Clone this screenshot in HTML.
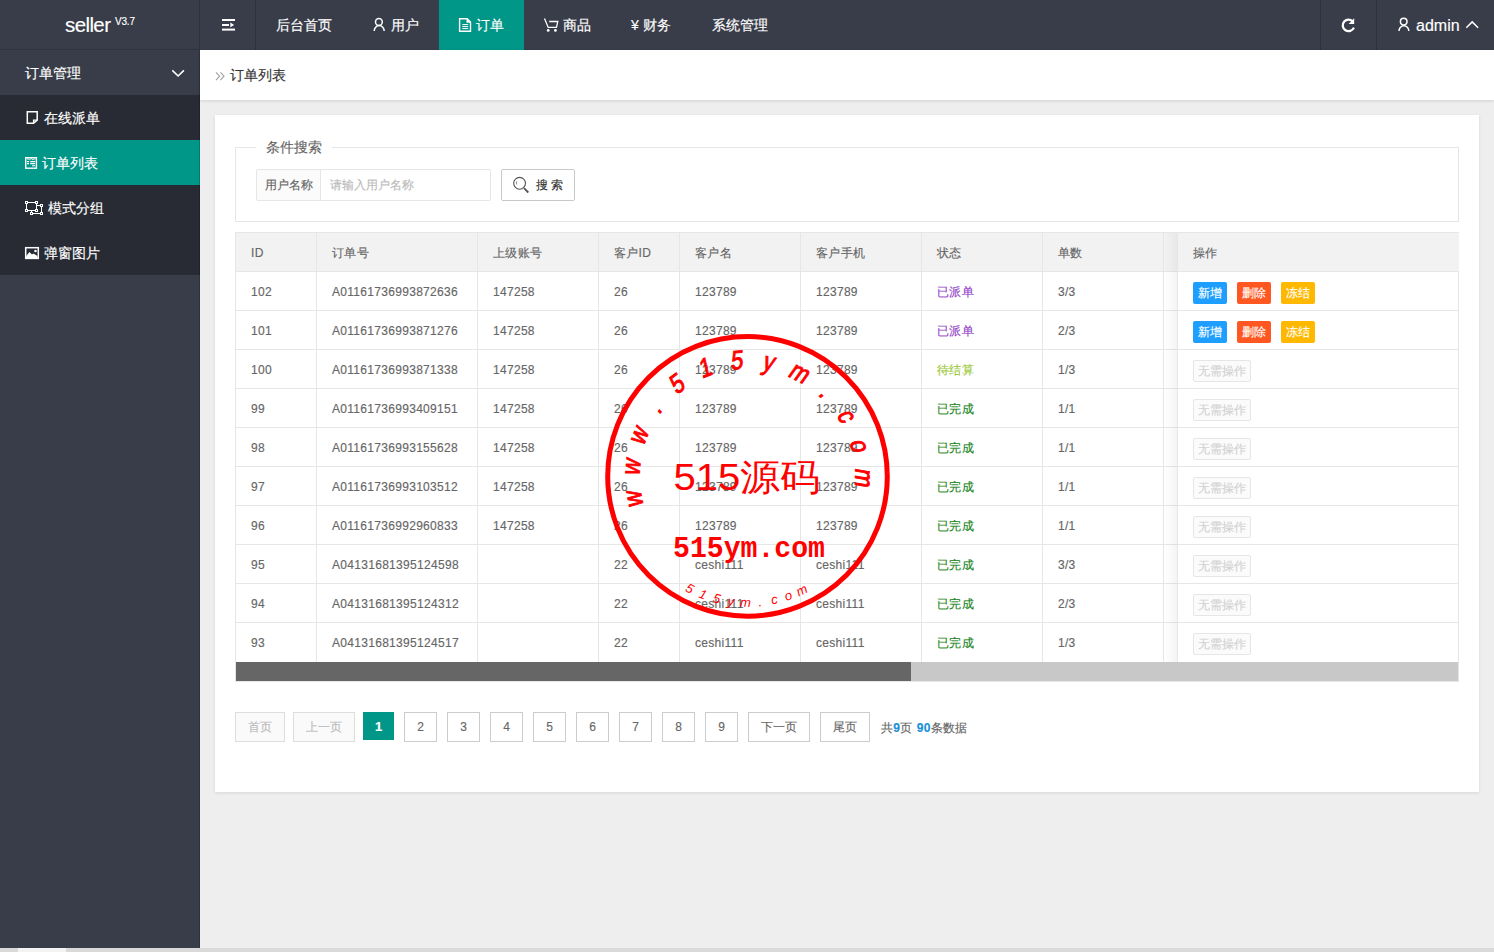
<!DOCTYPE html>
<html><head><meta charset="utf-8">
<style>
*{margin:0;padding:0;box-sizing:border-box}
html,body{width:1494px;height:952px;overflow:hidden;background:#eee;font-family:"Liberation Sans",sans-serif;font-size:14px;color:#666}
div,span,b{-webkit-text-stroke:0.15px currentColor}
.abs{position:absolute}
#hdr{position:absolute;left:0;top:0;width:1494px;height:50px;background:#393D49}
#side{position:absolute;left:0;top:50px;width:200px;height:898px;background:#393D49}
.ht{position:absolute;top:0;height:50px;line-height:50px;color:#fff;font-size:14px;white-space:nowrap}
.vl{position:absolute;top:0;width:1px;height:50px;background:#2f323c}
.nav{position:absolute;left:0;width:200px;height:45px;line-height:47px;color:#fff;font-size:14px}
#crumb{position:absolute;left:200px;top:50px;width:1294px;height:50px;background:#fff;box-shadow:0 1px 3px rgba(0,0,0,.12)}
#card{position:absolute;left:215px;top:115px;width:1264px;height:677px;background:#fff;box-shadow:0 1px 3px rgba(0,0,0,.1)}
#scroll{position:absolute;left:0;top:948px;width:1494px;height:4px;background:#d9d9d9}

#tbl{position:absolute;left:0;top:0}
.hl{left:235px;width:1224px;height:1px;background:#e6e6e6}
.vl2{top:232px;width:1px;height:430px;background:#e6e6e6}
.th,.td{height:39px;line-height:39px;padding-top:2px;letter-spacing:0.3px;font-size:12px;color:#666;white-space:nowrap}
.sp{color:#9444c8}.sy{color:#9cc93a}.sg{color:#1a851a}
#fixr{position:absolute;left:1177px;top:233px;width:281px;height:429px;background:#fff;border-left:1px solid #e6e6e6}
#fshadow{position:absolute;left:1164px;top:233px;width:13px;height:429px;background:linear-gradient(to right,rgba(0,0,0,0),rgba(0,0,0,.045))}
.hl2{left:0;width:281px;height:1px;background:#e6e6e6}
.btn{height:22px;line-height:22px;padding:0 5px;font-size:12px;color:#fff;border-radius:2px;white-space:nowrap}
.b1{background:#1E9FFF}.b2{background:#FF5722}.b3{background:#FFB800}
.b0{background:#fbfbfb;border:1px solid #e6e6e6;color:#d2d2d2;line-height:20px;padding:0 4px}
#tbox{position:absolute;left:235px;top:232px;width:1224px;height:450px;border:1px solid #e6e6e6}
#sb{position:absolute;left:236px;top:662px;width:1222px;height:19px;background:#c8c8c8}
#sbt{position:absolute;left:0;top:0;width:675px;height:19px;background:#666}
#fs{position:absolute;left:235px;top:147px;width:1224px;height:75px;border:1px solid #e6e6e6}
#legend{position:absolute;left:256px;top:137px;padding:0 10px;background:#fff;font-size:14px;color:#666;line-height:20px}
.pg{position:absolute;top:712px;height:30px;line-height:29px;border:1px solid #ccc;background:#fff;color:#666;font-size:12px;text-align:center}
.pgd{color:#bbb;background:#fafafa;border-color:#ddd}
</style></head><body>
<div id="hdr">
  <div class="ht" style="left:65px;top:0px;font-size:20.5px;letter-spacing:-0.6px">seller</div><div class="ht" style="left:115px;font-size:10px;line-height:20px;top:11.5px;letter-spacing:-0.2px">V3.7</div>
  <div class="vl" style="left:199px"></div><div class="abs" style="left:0;top:49px;width:200px;height:1px;background:#30333d"></div>
  <div class="vl" style="left:255px"></div>
  <div class="abs" style="left:439px;top:0;width:85px;height:50px;background:#009688"></div>
  <div class="ht" style="left:276px">后台首页</div>
  <div class="ht" style="left:391px">用户</div>
  <div class="ht" style="left:476px">订单</div>
  <div class="ht" style="left:563px">商品</div>
  <div class="ht" style="left:631px">¥ 财务</div>
  <div class="ht" style="left:712px">系统管理</div>
  <div class="vl" style="left:1320px"></div>
  <div class="vl" style="left:1376px"></div>
  <div class="ht" style="left:1416px;top:1px;font-size:16px">admin</div>

<svg class="abs" style="left:0;top:0" width="1494" height="300" viewBox="0 0 1494 300">
<g fill="#fff">
<rect x="222" y="19" width="13" height="2"/>
<rect x="222" y="24" width="7" height="2"/>
<path d="M230.3 22.4 L234.2 24.9 L230.3 27.2 Z"/>
<rect x="222" y="28.6" width="13" height="2"/>
</g>
<g fill="none" stroke="#fff" stroke-width="1.5">
<circle cx="378.9" cy="22" r="3.4"/>
<path d="M374.2 30.9 A4.9 5.2 0 0 1 384.2 30.9"/>
<circle cx="1403.7" cy="21.6" r="3.3"/>
<path d="M1399 31 A4.8 5.2 0 0 1 1408.8 31"/>
</g>
<g fill="none" stroke="#fff" stroke-width="1.4">
<path d="M459.6 18.7 H467.2 L470.5 22 V31.2 H459.6 Z"/>
<path d="M462.3 24.6 H468.2 M462.3 26.6 H468.2 M462.3 28.6 H468.2" stroke-width="1"/>
<path d="M544.5 18.6 L548.2 27.4 H556.5 L557.8 21.5 H549.2" stroke-width="1.3"/>
<path d="M1466.3 27.8 L1472.2 21.9 L1478.1 27.8" stroke-width="1.5"/>
</g>
<path d="M466.5 18.7 L470.5 22.7 H466.5 Z" fill="#fff"/>
<circle cx="548.2" cy="30.4" r="1.4" fill="#fff"/>
<circle cx="555.4" cy="30.4" r="1.4" fill="#fff"/>
<path d="M1353.1 21.8 A5.8 5.8 0 1 0 1353.9 27.6" fill="none" stroke="#fff" stroke-width="2.3"/>
<path d="M1354.2 18.3 V24 H1348.6 Z" fill="#fff"/>
</svg>
</div>
<div id="side">
  <div class="nav" style="top:0;background:#393D49"><span class="abs" style="left:25px">订单管理</span></div>
  <div class="nav" style="top:45px;background:#282B33"><span class="abs" style="left:44px">在线派单</span></div>
  <div class="nav" style="top:90px;background:#009688"><span class="abs" style="left:42px">订单列表</span></div>
  <div class="nav" style="top:135px;background:#282B33"><span class="abs" style="left:48px">模式分组</span></div>
  <div class="nav" style="top:180px;background:#282B33"><span class="abs" style="left:44px">弹窗图片</span></div>
</div>
<svg class="abs" style="left:0;top:0" width="200" height="300" viewBox="0 0 200 300">
<path d="M172.3 70.4 L178.1 76 L183.9 70.4" fill="none" stroke="#fff" stroke-width="1.6"/>
<g fill="none" stroke="#fff" stroke-width="1.5">
<path d="M27.3 111.7 H37.2 V120.2 L33.5 123.2 H27.3 Z"/>
<path d="M33.5 123.2 V120.2 H37.2" stroke-width="1.2"/>
<rect x="25.7" y="157.7" width="10.7" height="10.5" stroke-width="1.4"/>
<path d="M27 161.6 H29 M30.2 161.6 H35 M27 163.6 H29 M30.2 163.6 H35 M32 165.7 H35" stroke-width="1.1"/>
<path d="M27 159.2 L28.3 158.6 A1.1 1.1 0 0 0 30.5 158.6 L31.8 158.6 A1.1 1.1 0 0 0 34 158.6 L35.2 159.2" stroke-width="0.9"/>
<rect x="25.7" y="247.7" width="12.6" height="10.7"/>
</g>
<path d="M26.2 256 L29.5 252 L32 254.5 L33.5 253.5 L37.5 256 V258.3 H26.2 Z" fill="#fff"/>
<circle cx="35.5" cy="251" r="1.3" fill="#fff"/>
<g fill="none" stroke="#fff" stroke-width="1.2">
<path d="M26.5 202.5 H36.5 V210.5 H26.5 Z" stroke-width="1"/>
<path d="M36.5 205.5 H41.5 V213.5 H31.5 V210.5" stroke-width="1"/>
</g>
<g fill="#fff"><rect x="25.0" y="201.0" width="3" height="3"/><rect x="35.0" y="201.0" width="3" height="3"/><rect x="25.0" y="209.0" width="3" height="3"/><rect x="35.0" y="209.0" width="3" height="3"/><rect x="40.0" y="204.0" width="3" height="3"/><rect x="30.0" y="212.0" width="3" height="3"/><rect x="40.0" y="212.0" width="3" height="3"/></g><g fill="#282B33"><rect x="26.0" y="202.0" width="1" height="1"/><rect x="36.0" y="202.0" width="1" height="1"/><rect x="26.0" y="210.0" width="1" height="1"/><rect x="36.0" y="210.0" width="1" height="1"/><rect x="41.0" y="205.0" width="1" height="1"/><rect x="31.0" y="213.0" width="1" height="1"/><rect x="41.0" y="213.0" width="1" height="1"/></g>
</svg>

<div class="abs" style="left:199px;top:50px;width:1px;height:898px;background:rgba(0,0,0,.18)"></div>
<div id="crumb"><svg class="abs" style="left:0;top:0" width="40" height="50" viewBox="200 50 40 50"><path d="M216 72.3 L219.6 76.2 L216 80.1 M220.4 72.3 L224 76.2 L220.4 80.1" fill="none" stroke="#a0a0a0" stroke-width="1.1"/></svg><span class="abs" style="left:30px;top:0;line-height:50px;color:#333">订单列表</span></div>
<div id="card">
</div>

<div id="fs"></div>
<div id="legend">条件搜索</div>
<div class="abs" style="left:256px;top:169px;width:65px;height:32px;background:#fbfbfb;border:1px solid #e6e6e6;border-radius:2px 0 0 2px;font-size:12px;line-height:30px;padding-left:8px;color:#666">用户名称</div>
<div class="abs" style="left:320px;top:169px;width:171px;height:32px;background:#fff;border:1px solid #e6e6e6;border-radius:0 2px 2px 0;font-size:12px;line-height:30px;padding-left:9px;color:#bbb">请输入用户名称</div>
<div class="abs" style="left:501px;top:169px;width:74px;height:32px;background:#fff;border:1px solid #c9c9c9;border-radius:2px;font-size:12px;line-height:30px;padding-left:34px;color:#333">搜 索</div>
<svg class="abs" style="left:0;top:0" width="600" height="210" viewBox="0 0 600 210"><circle cx="519.6" cy="183.3" r="5.9" fill="none" stroke="#555" stroke-width="1.1"/><path d="M524 188.2 L528.3 192.5" stroke="#555" stroke-width="1.8"/><path d="M516.8 181.3 Q516 183 516.8 184.5" stroke="#777" stroke-width="0.8" fill="none"/></svg>
<div id="tbox"></div>
<div id="tbl">
<div class="abs" style="left:236px;top:233px;width:1222px;height:38px;background:#f2f2f2"></div>
<div class="abs hl" style="top:271px"></div>
<div class="abs hl" style="top:310px"></div>
<div class="abs hl" style="top:349px"></div>
<div class="abs hl" style="top:388px"></div>
<div class="abs hl" style="top:427px"></div>
<div class="abs hl" style="top:466px"></div>
<div class="abs hl" style="top:505px"></div>
<div class="abs hl" style="top:544px"></div>
<div class="abs hl" style="top:583px"></div>
<div class="abs hl" style="top:622px"></div>
<div class="abs vl2" style="left:316px"></div>
<div class="abs vl2" style="left:477px"></div>
<div class="abs vl2" style="left:598px"></div>
<div class="abs vl2" style="left:679px"></div>
<div class="abs vl2" style="left:800px"></div>
<div class="abs vl2" style="left:921px"></div>
<div class="abs vl2" style="left:1042px"></div>
<div class="abs vl2" style="left:1163px"></div>
<div class="abs th" style="left:251px;top:232px">ID</div>
<div class="abs th" style="left:332px;top:232px">订单号</div>
<div class="abs th" style="left:493px;top:232px">上级账号</div>
<div class="abs th" style="left:614px;top:232px">客户ID</div>
<div class="abs th" style="left:695px;top:232px">客户名</div>
<div class="abs th" style="left:816px;top:232px">客户手机</div>
<div class="abs th" style="left:937px;top:232px">状态</div>
<div class="abs th" style="left:1058px;top:232px">单数</div>
<div class="abs td" style="left:251px;top:271px">102</div>
<div class="abs td" style="left:332px;top:271px">A01161736993872636</div>
<div class="abs td" style="left:493px;top:271px">147258</div>
<div class="abs td" style="left:614px;top:271px">26</div>
<div class="abs td" style="left:695px;top:271px">123789</div>
<div class="abs td" style="left:816px;top:271px">123789</div>
<div class="abs td sp" style="left:937px;top:271px">已派单</div>
<div class="abs td" style="left:1058px;top:271px">3/3</div>
<div class="abs td" style="left:251px;top:310px">101</div>
<div class="abs td" style="left:332px;top:310px">A01161736993871276</div>
<div class="abs td" style="left:493px;top:310px">147258</div>
<div class="abs td" style="left:614px;top:310px">26</div>
<div class="abs td" style="left:695px;top:310px">123789</div>
<div class="abs td" style="left:816px;top:310px">123789</div>
<div class="abs td sp" style="left:937px;top:310px">已派单</div>
<div class="abs td" style="left:1058px;top:310px">2/3</div>
<div class="abs td" style="left:251px;top:349px">100</div>
<div class="abs td" style="left:332px;top:349px">A01161736993871338</div>
<div class="abs td" style="left:493px;top:349px">147258</div>
<div class="abs td" style="left:614px;top:349px">26</div>
<div class="abs td" style="left:695px;top:349px">123789</div>
<div class="abs td" style="left:816px;top:349px">123789</div>
<div class="abs td sy" style="left:937px;top:349px">待结算</div>
<div class="abs td" style="left:1058px;top:349px">1/3</div>
<div class="abs td" style="left:251px;top:388px">99</div>
<div class="abs td" style="left:332px;top:388px">A01161736993409151</div>
<div class="abs td" style="left:493px;top:388px">147258</div>
<div class="abs td" style="left:614px;top:388px">26</div>
<div class="abs td" style="left:695px;top:388px">123789</div>
<div class="abs td" style="left:816px;top:388px">123789</div>
<div class="abs td sg" style="left:937px;top:388px">已完成</div>
<div class="abs td" style="left:1058px;top:388px">1/1</div>
<div class="abs td" style="left:251px;top:427px">98</div>
<div class="abs td" style="left:332px;top:427px">A01161736993155628</div>
<div class="abs td" style="left:493px;top:427px">147258</div>
<div class="abs td" style="left:614px;top:427px">26</div>
<div class="abs td" style="left:695px;top:427px">123789</div>
<div class="abs td" style="left:816px;top:427px">123789</div>
<div class="abs td sg" style="left:937px;top:427px">已完成</div>
<div class="abs td" style="left:1058px;top:427px">1/1</div>
<div class="abs td" style="left:251px;top:466px">97</div>
<div class="abs td" style="left:332px;top:466px">A01161736993103512</div>
<div class="abs td" style="left:493px;top:466px">147258</div>
<div class="abs td" style="left:614px;top:466px">26</div>
<div class="abs td" style="left:695px;top:466px">123789</div>
<div class="abs td" style="left:816px;top:466px">123789</div>
<div class="abs td sg" style="left:937px;top:466px">已完成</div>
<div class="abs td" style="left:1058px;top:466px">1/1</div>
<div class="abs td" style="left:251px;top:505px">96</div>
<div class="abs td" style="left:332px;top:505px">A01161736992960833</div>
<div class="abs td" style="left:493px;top:505px">147258</div>
<div class="abs td" style="left:614px;top:505px">26</div>
<div class="abs td" style="left:695px;top:505px">123789</div>
<div class="abs td" style="left:816px;top:505px">123789</div>
<div class="abs td sg" style="left:937px;top:505px">已完成</div>
<div class="abs td" style="left:1058px;top:505px">1/1</div>
<div class="abs td" style="left:251px;top:544px">95</div>
<div class="abs td" style="left:332px;top:544px">A04131681395124598</div>
<div class="abs td" style="left:614px;top:544px">22</div>
<div class="abs td" style="left:695px;top:544px">ceshi111</div>
<div class="abs td" style="left:816px;top:544px">ceshi111</div>
<div class="abs td sg" style="left:937px;top:544px">已完成</div>
<div class="abs td" style="left:1058px;top:544px">3/3</div>
<div class="abs td" style="left:251px;top:583px">94</div>
<div class="abs td" style="left:332px;top:583px">A04131681395124312</div>
<div class="abs td" style="left:614px;top:583px">22</div>
<div class="abs td" style="left:695px;top:583px">ceshi111</div>
<div class="abs td" style="left:816px;top:583px">ceshi111</div>
<div class="abs td sg" style="left:937px;top:583px">已完成</div>
<div class="abs td" style="left:1058px;top:583px">2/3</div>
<div class="abs td" style="left:251px;top:622px">93</div>
<div class="abs td" style="left:332px;top:622px">A04131681395124517</div>
<div class="abs td" style="left:614px;top:622px">22</div>
<div class="abs td" style="left:695px;top:622px">ceshi111</div>
<div class="abs td" style="left:816px;top:622px">ceshi111</div>
<div class="abs td sg" style="left:937px;top:622px">已完成</div>
<div class="abs td" style="left:1058px;top:622px">1/3</div>
</div>
<div id="fixr">
<div class="abs" style="left:0;top:0;width:281px;height:38px;background:#f2f2f2"></div>
<div class="abs hl2" style="top:38px"></div>
<div class="abs hl2" style="top:77px"></div>
<div class="abs hl2" style="top:116px"></div>
<div class="abs hl2" style="top:155px"></div>
<div class="abs hl2" style="top:194px"></div>
<div class="abs hl2" style="top:233px"></div>
<div class="abs hl2" style="top:272px"></div>
<div class="abs hl2" style="top:311px"></div>
<div class="abs hl2" style="top:350px"></div>
<div class="abs hl2" style="top:389px"></div>
<div class="abs th" style="left:15px;top:-1px">操作</div>
<div class="abs btn b1" style="left:15px;top:49px">新增</div>
<div class="abs btn b2" style="left:59px;top:49px">删除</div>
<div class="abs btn b3" style="left:103px;top:49px">冻结</div>
<div class="abs btn b1" style="left:15px;top:88px">新增</div>
<div class="abs btn b2" style="left:59px;top:88px">删除</div>
<div class="abs btn b3" style="left:103px;top:88px">冻结</div>
<div class="abs btn b0" style="left:15px;top:127px">无需操作</div>
<div class="abs btn b0" style="left:15px;top:166px">无需操作</div>
<div class="abs btn b0" style="left:15px;top:205px">无需操作</div>
<div class="abs btn b0" style="left:15px;top:244px">无需操作</div>
<div class="abs btn b0" style="left:15px;top:283px">无需操作</div>
<div class="abs btn b0" style="left:15px;top:322px">无需操作</div>
<div class="abs btn b0" style="left:15px;top:361px">无需操作</div>
<div class="abs btn b0" style="left:15px;top:400px">无需操作</div>
</div>
<div id="fshadow"></div>
<div id="sb"><div id="sbt"></div></div>
<div class="pg pgd" style="left:235px;width:50px">首页</div>
<div class="pg pgd" style="left:293px;width:62px">上一页</div>
<div class="pg" style="left:363px;width:31px;height:28px;line-height:27px;top:712px;background:#009688;border-color:#009688;color:#fff;font-weight:bold;font-size:13px">1</div>
<div class="pg" style="left:404px;width:33px">2</div>
<div class="pg" style="left:447px;width:33px">3</div>
<div class="pg" style="left:490px;width:33px">4</div>
<div class="pg" style="left:533px;width:33px">5</div>
<div class="pg" style="left:576px;width:33px">6</div>
<div class="pg" style="left:619px;width:33px">7</div>
<div class="pg" style="left:662px;width:33px">8</div>
<div class="pg" style="left:705px;width:33px">9</div>
<div class="pg" style="left:748px;width:62px">下一页</div>
<div class="pg" style="left:820px;width:50px">尾页</div>
<div class="abs" style="left:881px;top:713px;line-height:30px;font-size:12px;color:#666;letter-spacing:0.2px">共<b style="color:#1a8fd8">9</b>页 <b style="margin-left:1px;color:#1a8fd8">90</b>条数据</div>
<svg class="abs" style="left:0;top:0" width="1494" height="952" viewBox="0 0 1494 952">
<circle cx="747.5" cy="476.4" r="139.8" fill="none" stroke="#f00" stroke-width="5"/>
<text transform="translate(633.1,498.6) rotate(-101) scale(0.92,1.1) skewX(-10)" y="8" text-anchor="middle" font-size="24" font-family="Liberation Sans" fill="#f00" stroke="#f00" stroke-width="0.9">w</text>
<text transform="translate(631.4,466.2) rotate(-85) scale(0.92,1.1) skewX(-10)" y="8" text-anchor="middle" font-size="24" font-family="Liberation Sans" fill="#f00" stroke="#f00" stroke-width="0.9">w</text>
<text transform="translate(638.7,434.7) rotate(-69) scale(0.92,1.1) skewX(-10)" y="8" text-anchor="middle" font-size="24" font-family="Liberation Sans" fill="#f00" stroke="#f00" stroke-width="0.9">w</text>
<text transform="translate(654.5,406.3) rotate(-53) scale(0.92,1.1) skewX(-10)" y="8" text-anchor="middle" font-size="24" font-family="Liberation Sans" fill="#f00" stroke="#f00" stroke-width="0.9">.</text>
<text transform="translate(677.4,383.4) rotate(-37) scale(0.92,1.1) skewX(-10)" y="8" text-anchor="middle" font-size="24" font-family="Liberation Sans" fill="#f00" stroke="#f00" stroke-width="0.9">5</text>
<text transform="translate(705.8,367.6) rotate(-21) scale(0.92,1.1) skewX(-10)" y="8" text-anchor="middle" font-size="24" font-family="Liberation Sans" fill="#f00" stroke="#f00" stroke-width="0.9">1</text>
<text transform="translate(737.3,360.3) rotate(-5) scale(0.92,1.1) skewX(-10)" y="8" text-anchor="middle" font-size="24" font-family="Liberation Sans" fill="#f00" stroke="#f00" stroke-width="0.9">5</text>
<text transform="translate(769.7,362.0) rotate(11) scale(0.92,1.1) skewX(-10)" y="8" text-anchor="middle" font-size="24" font-family="Liberation Sans" fill="#f00" stroke="#f00" stroke-width="0.9">y</text>
<text transform="translate(800.4,372.6) rotate(27) scale(0.92,1.1) skewX(-10)" y="8" text-anchor="middle" font-size="24" font-family="Liberation Sans" fill="#f00" stroke="#f00" stroke-width="0.9">m</text>
<text transform="translate(827.0,391.2) rotate(43) scale(0.92,1.1) skewX(-10)" y="8" text-anchor="middle" font-size="24" font-family="Liberation Sans" fill="#f00" stroke="#f00" stroke-width="0.9">.</text>
<text transform="translate(847.4,416.4) rotate(59) scale(0.92,1.1) skewX(-10)" y="8" text-anchor="middle" font-size="24" font-family="Liberation Sans" fill="#f00" stroke="#f00" stroke-width="0.9">c</text>
<text transform="translate(860.0,446.2) rotate(75) scale(0.92,1.1) skewX(-10)" y="8" text-anchor="middle" font-size="24" font-family="Liberation Sans" fill="#f00" stroke="#f00" stroke-width="0.9">o</text>
<text transform="translate(864.0,478.4) rotate(91) scale(0.92,1.1) skewX(-10)" y="8" text-anchor="middle" font-size="24" font-family="Liberation Sans" fill="#f00" stroke="#f00" stroke-width="0.9">m</text>
<text transform="translate(689.7,588.4) rotate(27.3)" y="4.5" text-anchor="middle" font-size="13" font-family="Liberation Sans" fill="#f00" font-style="italic">5</text>
<text transform="translate(703.0,594.3) rotate(20.7)" y="4.5" text-anchor="middle" font-size="13" font-family="Liberation Sans" fill="#f00" font-style="italic">1</text>
<text transform="translate(716.8,598.6) rotate(14.1)" y="4.5" text-anchor="middle" font-size="13" font-family="Liberation Sans" fill="#f00" font-style="italic">5</text>
<text transform="translate(731.1,601.3) rotate(7.5)" y="4.5" text-anchor="middle" font-size="13" font-family="Liberation Sans" fill="#f00" font-style="italic">y</text>
<text transform="translate(745.5,602.4) rotate(0.9)" y="4.5" text-anchor="middle" font-size="13" font-family="Liberation Sans" fill="#f00" font-style="italic">m</text>
<text transform="translate(760.0,601.8) rotate(-5.7)" y="4.5" text-anchor="middle" font-size="13" font-family="Liberation Sans" fill="#f00" font-style="italic">.</text>
<text transform="translate(774.3,599.5) rotate(-12.3)" y="4.5" text-anchor="middle" font-size="13" font-family="Liberation Sans" fill="#f00" font-style="italic">c</text>
<text transform="translate(788.3,595.6) rotate(-18.9)" y="4.5" text-anchor="middle" font-size="13" font-family="Liberation Sans" fill="#f00" font-style="italic">o</text>
<text transform="translate(801.7,590.1) rotate(-25.5)" y="4.5" text-anchor="middle" font-size="13" font-family="Liberation Sans" fill="#f00" font-style="italic">m</text>
<text x="673.5" y="489.5" font-size="37" font-family="Liberation Sans" fill="#f00" textLength="147" lengthAdjust="spacingAndGlyphs">515源码</text>
<text x="673" y="556.5" font-size="30" font-weight="bold" font-family="Liberation Mono" fill="#f00" textLength="152" lengthAdjust="spacingAndGlyphs">515ym.com</text>
</svg>
<div id="scroll"><div style="position:absolute;left:18px;top:0;width:48px;height:4px;background:#f3f3f3"></div></div>
</body></html>
